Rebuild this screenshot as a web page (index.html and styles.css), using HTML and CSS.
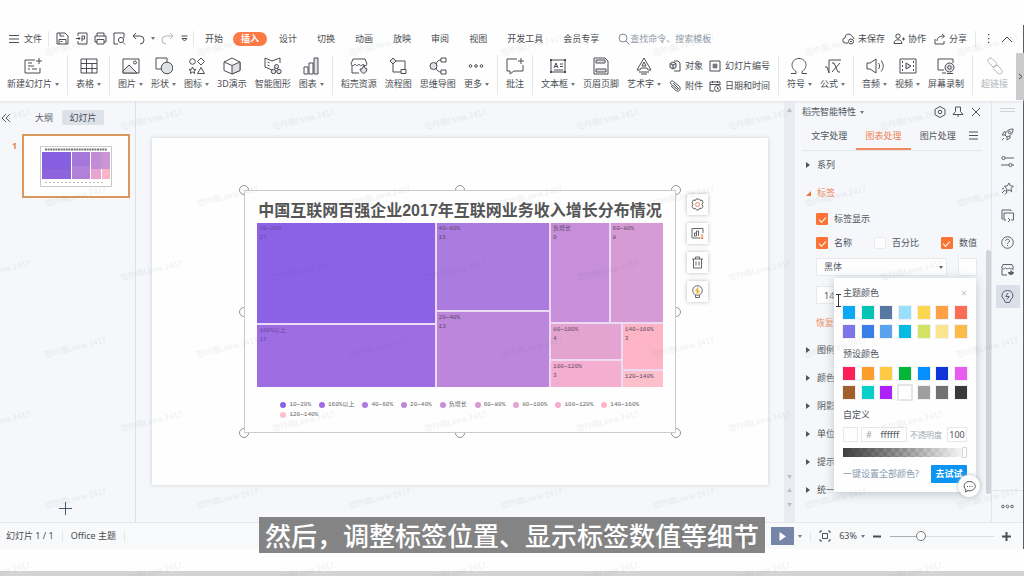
FILE: index.html
```html
<!DOCTYPE html>
<html lang="zh-CN">
<head>
<meta charset="utf-8">
<meta name="viewport" content="width=device-width, initial-scale=1">
<title>演示文稿</title>
<link rel="stylesheet" href="styles.css">
</head>
<body>
<div class="app">
  <nav class="menubar">
    <button class="file"><svg class="i12" viewBox="0 0 12 12"><path d="M1 2.500h10M1 6h10M1 9.500h10"/></svg>文件</button>
    <i class="sep"></i>
    <div class="quick">
      <button aria-label="保存"><svg class="i13" viewBox="0 0 13 13"><path d="M1 1h8l3 3v8H1zM3 12V7.500h7V12M4 1v3h4M4.500 9.500h2"/></svg></button>
      <button aria-label="导出"><svg class="i13" viewBox="0 0 13 13"><path d="M3 4V1h9v11H3V9M1 6.500h4M3.500 5l1.500 1.500L3.500 8M7 9.500V4h2.500v3H7"/></svg></button>
      <button aria-label="打印"><svg class="i13" viewBox="0 0 13 13"><path d="M3 4V1h7v3M3 10H1V4h11v6h-2M3 7.500h7V12H3z"/></svg></button>
      <button aria-label="预览"><svg class="i13" viewBox="0 0 13 13"><path d="M5 12H1V1h10v5M10 10.500l2 2"/><circle cx="8" cy="8" r="2.600"/></svg></button>
      <button aria-label="撤销"><svg class="i13" viewBox="0 0 13 13"><path d="M4 1L1 4l3 3M1 4h7a4 4 0 0 1 0 8"/></svg></button>
      <i class="caret"></i>
      <button aria-label="重做" class="dim"><svg class="i13" viewBox="0 0 13 13"><path d="M9 1l3 3-3 3M12 4H5a4 4 0 0 0 0 8"/></svg></button>
      <button aria-label="更多快捷"><svg class="i9" viewBox="0 0 9 9"><path d="M1.500 2h6M2 4.500h5L4.500 7z"/></svg></button>
    </div>
    <i class="sep"></i>
    <div class="tabs">
      <button>开始</button><button class="on">插入</button><button>设计</button><button>切换</button><button>动画</button><button>放映</button><button>审阅</button><button>视图</button><button>开发工具</button><button>会员专享</button>
    </div>
    <label class="search"><svg class="i12" viewBox="0 0 12 12"><circle cx="5" cy="5" r="4"/><path d="M8 8l3.500 3.500"/></svg><input type="text" placeholder="查找命令、搜索模板" aria-label="查找命令"></label>
    <div class="account">
      <button><svg class="i13" viewBox="0 0 13 13"><path d="M6 11H3.500a2.500 2.500 0 0 1-.5-5 3.600 3.600 0 0 1 7-1.500 2.800 2.800 0 0 1 2 2.500"/><circle cx="9" cy="9.500" r="2.500"/><path d="M8 9.500h2"/></svg>未保存</button>
      <button><svg class="i12" viewBox="0 0 12 12"><circle cx="5" cy="3.200" r="2.200"/><path d="M1 10.500c0-5 8-5 8 0zM9 6h3M10.500 4.500v3"/></svg>协作</button>
      <button><svg class="i12" viewBox="0 0 12 12"><path d="M1 6v5h9V8M3 8c0-3 2-5 7-5M8 1l2.500 2L8 5.500"/></svg>分享</button>
      <i class="sep"></i>
      <button aria-label="更多"><svg class="i9" viewBox="0 0 9 9"><path class="fill" d="M4 0h1.300v1.300H4zM4 4h1.300v1.300H4zM4 7.700h1.300V9H4z"/></svg></button>
      <button aria-label="收起"><svg class="i12" viewBox="0 0 12 12"><path d="M1 9l5-5 5 5"/></svg></button>
    </div>
  </nav>

  <div class="ribbon">
    <button><svg viewBox="0 0 18 18"><path d="M11 3H1v13h15v-5M4 6h4M4 9h6M4 12h2M8 12h5M15 1v6M12 4h6"/></svg><span class="more">新建幻灯片</span></button>
    <i class="sep"></i>
    <button><svg viewBox="0 0 18 18"><path d="M1 2h16v14H1zM1 6.500h16M1 11.500h16M6.500 2v14M12 6.500V16"/></svg><span class="more">表格</span></button>
    <i class="sep"></i>
    <button><svg viewBox="0 0 18 18"><path d="M1 2h16v14H1z"/><path class="soft" d="M1 14l6-6 8 8H1z"/><circle cx="13" cy="5.500" r="1.500"/></svg><span class="more">图片</span></button>
    <button><svg viewBox="0 0 18 18"><path d="M1 1h11v11H1z"/><circle class="soft" cx="12" cy="11" r="5.800"/></svg><span class="more">形状</span></button>
    <button><svg viewBox="0 0 18 18"><circle cx="4.500" cy="4.500" r="2.800"/><path d="M13 1l3.500 3.500L13 8 9.500 4.500zM13 10.500l3.500 6h-7zM4.500 10l1 2.300 2.500.2-2 1.600.7 2.400-2.200-1.400-2.200 1.400.7-2.400-2-1.600 2.500-.2z"/></svg><span class="more">图标</span></button>
    <button><svg viewBox="0 0 18 18"><path d="M9 1l8 4v8.500L9 17l-8-3.500V5z"/><path class="soft" d="M9 8.500L17 5v8.500L9 17z"/><path d="M1 5l8 3.500"/></svg><span>3D演示</span></button>
    <button><svg viewBox="0 0 18 18"><path d="M8 13l-7-3V1l7 3 8-3v5M3.500 5l2 1M3.500 8l2 1"/><path d="M12.500 9L9.500 14H15z"/><circle class="soft" cx="12.500" cy="9.500" r="2"/><circle class="soft" cx="9.500" cy="14.500" r="2.200"/><circle class="soft" cx="15" cy="14.500" r="2.200"/></svg><span>智能图形</span></button>
    <button><svg viewBox="0 0 18 18"><path d="M2 10h4v7H2zM7 6h4v11H7z"/><path class="soft" d="M12 1h4v16h-4z"/></svg><span class="more">图表</span></button>
    <i class="sep"></i>
    <button><svg viewBox="0 0 18 18"><path d="M9 16H2V8M16 8v1M3 2h12l2 5c-1 2-3 2-4 0-1 2-3 2-4 0-1 2-3 2-4 0-1 2-3 2-4 0z"/><path class="soft" d="M10 12c1 5 6 6 7 0l-2-1-1-3-2 4z"/></svg><span>稻壳资源</span></button>
    <button><svg viewBox="0 0 18 18"><path class="soft" d="M4 1l3 3-3 3-3-3z"/><path d="M7 4h9v8M4 7v8h8M12 12.500h5v4h-5z"/></svg><span>流程图</span></button>
    <button><svg viewBox="0 0 18 18"><circle class="soft" cx="4.500" cy="9" r="3.500"/><path d="M7 7c1-3 3-4 5-4M7 11c1 3 3 4 5 4M12 1h5v4h-5zM12 13h5v4h-5z"/></svg><span>思维导图</span></button>
    <button><svg viewBox="0 0 18 18"><circle cx="3.500" cy="9" r="1.300"/><circle cx="9" cy="9" r="1.300"/><circle cx="14.500" cy="9" r="1.300"/></svg><span class="more">更多</span></button>
    <i class="sep"></i>
    <button><svg viewBox="0 0 18 18"><path d="M11 2H1v12h3v3l4-3h9V8M15 1v6M12 4h6"/></svg><span>批注</span></button>
    <i class="sep"></i>
    <button><svg viewBox="0 0 18 18"><path d="M2 3h14v12H2zM5 11l2-5 2 5M6 9.500h2M11 7h3M11 9.500h3M5 13h9"/><path class="fill" d="M1 2h2v2H1zM15 2h2v2h-2zM1 14h2v2H1zM15 14h2v2h-2z"/></svg><span class="more">文本框</span></button>
    <button><svg viewBox="0 0 18 18"><path d="M2 1h11l3 3v13H2z"/><path class="soft" d="M4 3h9v3H4zM4 12h10v3H4z"/></svg><span>页眉页脚</span></button>
    <button><svg viewBox="0 0 18 18"><path d="M9 1l7 12h-3l-1-2H6l-1 2H2zM9 5l-2 4h4zM4 15h10M6 17h6"/></svg><span class="more">艺术字</span></button>
    <div class="pairs">
      <button><svg viewBox="0 0 12 12"><path d="M5 1h4l2 2v8H5"/><path class="soft" d="M4 2l3 1.500v4L4 9 1 7.500v-4zM1 3.500L4 5l3-1.500M4 5v4"/></svg>对象</button>
      <button><svg viewBox="0 0 12 12"><path d="M1 1h10v10H1zM5 3.500v5M7 3.500v5M3.500 5h5M3.500 7h5"/></svg>幻灯片编号</button>
      <button><svg viewBox="0 0 12 12"><path d="M4 3l5 5c1 1 0 2-1 1L2 4C0 2 3 0 4.500 1.500l6 5c2 3-1 6-3.500 4L2 6"/></svg>附件</button>
      <button><svg viewBox="0 0 12 12"><path d="M5 11H1V2h10v3M1 4.500h10M3.500 1v2M8.500 1v2"/><circle cx="8.500" cy="8.500" r="3"/><path d="M8.500 7v2H10"/></svg>日期和时间</button>
    </div>
    <i class="sep"></i>
    <button><svg viewBox="0 0 18 18"><path d="M1 16.500h5v-2C-1 10 2 1.500 9 1.500S19 10 12 14.500v2h5"/></svg><span class="more">符号</span></button>
    <button><svg viewBox="0 0 18 18"><path d="M1 10h2l2 6V3h12M8 6h2l4 9h2M16 6L8 15"/></svg><span class="more">公式</span></button>
    <i class="sep"></i>
    <button><svg viewBox="0 0 18 18"><path d="M1 6h3l6-4v14l-6-4H1zM12.500 6c1.500 2 1.500 4 0 6M15 3.500c3 4 3 7 0 11"/></svg><span class="more">音频</span></button>
    <button><svg viewBox="0 0 18 18"><path d="M1 2h16v14H1z"/><path class="soft" d="M7 6l5 3-5 3z"/><path stroke-dasharray="2 2" d="M3.500 4v11M14.500 4v11"/></svg><span class="more">视频</span></button>
    <button><svg viewBox="0 0 18 18"><path d="M7 13H1V2h15v4M5 16h4"/><circle class="soft" cx="12.500" cy="10.500" r="4.500"/><circle cx="12.500" cy="10.500" r="1.800"/><path d="M10 16.500h6"/></svg><span>屏幕录制</span></button>
    <i class="sep"></i>
    <button class="dim"><svg viewBox="0 0 18 18"><path d="M7 10L2.500 5.500c-2-3 1-5.500 3.500-4L10 5.500c2 3-1 5-3 4M11 8l4.500 4.500c2 3-1 5.500-3.500 4L8 12.500c-2-3 1-5 3-4"/></svg><span>超链接</span></button>
    <button class="scroll" aria-label="向右滚动"><svg class="i9" viewBox="0 0 9 9"><path d="M3 2l3 2.500L3 7"/></svg></button>
  </div>

  <main class="work">
    <aside class="outline">
      <div class="outline-tabs">
        <button aria-label="收起"><svg class="i12" viewBox="0 0 12 12"><path d="M5 2L1 6l4 4M9 2L5 6l4 4"/></svg></button>
        <button>大纲</button><button class="on">幻灯片</button>
      </div>
      <div class="thumb-row">
        <span>1</span>
        <div class="thumb">
          <svg viewBox="0 0 72 41"><path fill="#fff" stroke="#c8c8c8" d="M.5.500h71v40H.5z"/><path stroke="#777" stroke-width="2" stroke-dasharray="2 .6" d="M5 3.500h62"/><g stroke="none"><path fill="#855fdf" d="M2 6h29v17H2z"/><path fill="#8d64dc" d="M2 23h29v10H2z"/><path fill="#a577d9" d="M32 6h18v14H32z"/><path fill="#b181d8" d="M32 20h18v13H32z"/><path fill="#c18cd6" d="M51 6h10v17H51z"/><path fill="#cb94d4" d="M61 6h9v17h-9z"/><path fill="#e6a5cf" d="M51 23h10v10H51z"/><path fill="#f9b5c8" d="M62 23h8v10h-8z"/></g><path stroke="#bbb" stroke-dasharray="2 2" d="M5 36.500h60"/></svg>
        </div>
      </div>
      <button class="add" aria-label="新建幻灯片"><svg class="i13" viewBox="0 0 13 13"><path d="M6.500 0v13M0 6.500h13"/></svg></button>
    </aside>

    <section class="stage">
      <div class="slide">
        <div class="selection">
          <i class="h nw"></i><i class="h n"></i><i class="h ne"></i><i class="h w"></i><i class="h e"></i><i class="h sw"></i><i class="h s"></i><i class="h se"></i>
          <div class="chart">
            <h1>中国互联网百强企业2017年互联网业务收入增长分布情况</h1>
            <div class="treemap">
              <div class="col a"><div class="c1 faint">10~20%<br>27</div><div class="c2 faint">160%以上<br>17</div></div>
              <div class="col b"><div class="c3">40~60%<br>15</div><div class="c4">20~40%<br>13</div></div>
              <div class="col c">
                <div class="top"><div class="c5">负增长<br>9</div><div class="c6">60~80%<br>8</div></div>
                <div class="bottom">
                  <div class="col d"><div class="c7">80~100%<br>4</div><div class="c8">100~120%<br>3</div></div>
                  <div class="col e"><div class="c9">140~160%<br>3</div><div class="c10">120~140%</div></div>
                </div>
              </div>
            </div>
            <ul class="legend">
              <li><i class="c1"></i>10~20%</li><li><i class="c2"></i>160%以上</li><li><i class="c3"></i>40~60%</li><li><i class="c4"></i>20~40%</li><li><i class="c5"></i>负增长</li><li><i class="c6"></i>60~80%</li><li><i class="c7"></i>80~100%</li><li><i class="c8"></i>100~120%</li><li><i class="c9"></i>140~160%</li><li><i class="c10"></i>120~140%</li>
            </ul>
          </div>
          <div class="tools">
            <button aria-label="设置"><svg class="i13" viewBox="0 0 13 13"><path d="M5 1h3l1 1.500 2-.5 1 2.500-1 2 1 2-1.500 2-2-.2L7.500 12h-2L4.500 10.500l-2 .2L1 8.500l1-2-1-2L2.500 2l2 .5z"/><circle cx="6.500" cy="6.500" r="2" stroke="#f08a70"/></svg></button>
            <button aria-label="图表数据"><svg class="i13" viewBox="0 0 13 13"><path d="M9 11H1V1.500h11V6M3.500 9V6h2v3zM5.500 9V4h2v5"/><path stroke="#f0763c" d="M11 7v5M9.500 10.500L11 12l1.500-1.500"/></svg></button>
            <button aria-label="删除"><svg class="i13" viewBox="0 0 13 13"><path d="M1 3h11M4.500 3V1h4v2M2.500 3v9h8V3M5 5.500v4M8 5.500v4"/></svg></button>
            <button aria-label="灵感"><svg class="i13" viewBox="0 0 13 13"><circle cx="6.500" cy="5.500" r="4.800"/><path d="M4.500 10v2.500h4V10"/><path fill="#f7c03c" stroke="#f0b030" d="M7 2.500L4.500 6h4L6 9z"/></svg></button>
          </div>
        </div>
      </div>
    </section>
    <div class="vscroll"><span>▲</span><div><span>▼</span><span>▲</span><span>▼</span></div></div>

    <aside class="props">
      <header>
        <span class="more">稻壳智能特性</span>
        <div>
          <button aria-label="设置"><svg class="i12" viewBox="0 0 12 12"><path d="M6 .5l5 2.800v5.400l-5 2.800-5-2.800V3.300z"/><circle cx="6" cy="6" r="1.800"/></svg></button>
          <button aria-label="固定"><svg class="i12" viewBox="0 0 12 12"><path d="M3.500 1h5v4.500L11 8.500H1l2.500-3zM6 8.500V11"/></svg></button>
          <button aria-label="关闭"><svg class="i12" viewBox="0 0 12 12"><path d="M2 2l8 8M10 2l-8 8"/></svg></button>
        </div>
      </header>
      <div class="prop-tabs">
        <button>文字处理</button><button class="on">图表处理</button><button>图片处理</button>
        <button class="list" aria-label="列表"><svg class="i9" viewBox="0 0 9 9"><path d="M0 1h9M0 4.500h9M0 8h9"/></svg></button>
      </div>
      <div class="acc">系列</div>
      <div class="acc open">标签</div>
      <div class="fields">
        <div class="checks"><label><input type="checkbox" checked>标签显示</label></div>
        <div class="checks spread"><label><input type="checkbox" checked>名称</label><label><input type="checkbox">百分比</label><label><input type="checkbox" checked>数值</label></div>
        <div class="line"><div class="pick"><select aria-label="字体"><option>黑体</option></select></div><button class="box" aria-label="字体颜色"></button></div>
        <div class="line"><input type="text" value="14" aria-label="字号"></div>
        <a href="#">恢复</a>
      </div>
      <div class="acc">图例</div><div class="acc">颜色</div><div class="acc">阴影</div><div class="acc">单位</div><div class="acc">提示</div><div class="acc">统一</div>
      <i class="thumbbar"></i>

      <div class="picker">
        <div class="phead"><b>主题颜色</b><button aria-label="关闭">×</button></div>
        <div class="swatches theme">
          <button aria-label="蓝"></button><button aria-label="青绿"></button><button aria-label="蓝灰"></button><button aria-label="浅蓝"></button><button aria-label="黄"></button><button aria-label="橙"></button><button aria-label="珊瑚"></button><button aria-label="紫"></button><button aria-label="钴蓝"></button><button aria-label="天蓝"></button><button aria-label="青"></button><button aria-label="黄绿"></button><button aria-label="浅黄"></button><button aria-label="杏"></button>
        </div>
        <b>预设颜色</b>
        <div class="swatches preset">
          <button aria-label="红"></button><button aria-label="橙"></button><button aria-label="黄"></button><button aria-label="绿"></button><button aria-label="蓝"></button><button aria-label="深蓝"></button><button aria-label="粉紫"></button><button aria-label="棕"></button><button aria-label="青"></button><button aria-label="紫"></button><button aria-label="白"></button><button aria-label="浅灰"></button><button aria-label="灰"></button><button aria-label="黑"></button>
        </div>
        <b>自定义</b>
        <div class="custom"><i></i><label class="hex"><span>#</span><input type="text" value="ffffff"></label><label class="op">不透明度<input type="text" value="100"></label></div>
        <input class="alpha" type="range" value="100" aria-label="不透明度">
        <div class="pfoot"><a href="#">一键设置全部颜色?</a><button>去试试</button></div>
        <button class="chat" aria-label="反馈"><svg class="i13" viewBox="0 0 13 13"><path d="M2.500 12l.5-2C-1 6 2 1.500 6.500 1.500S13 5 12 7.500s-4 4-7 3z"/><path class="fill" d="M4 6h1v1H4zM6.300 6h1v1h-1zM8.600 6h1v1h-1z"/></svg></button>
        <svg class="ibeam" viewBox="0 0 7 13"><path d="M1 .5h5M3.500.5v12M1 12.500h5"/></svg>
      </div>
    </aside>

    <nav class="rail">
      <i class="grip"></i>
      <button aria-label="美化"><svg viewBox="0 0 13 13"><path d="M4 7c1-4 4-6 8-6 0 4-2 7-6 8zM4 7H1l2-3h2M6 9v3l3-2V8M1 12l2-2"/><circle cx="8.500" cy="4.500" r="1.200"/></svg></button>
      <button aria-label="属性"><svg viewBox="0 0 13 13"><path d="M4 3h9M0 10h8M11 10h2"/><circle cx="2.500" cy="3" r="1.600"/><circle cx="9.500" cy="10" r="1.600"/></svg></button>
      <button aria-label="动画"><svg viewBox="0 0 13 13"><path d="M8 1l1.300 2.800 3 .4L10 6.500l.6 3L8 8l-3 1.500.6-3-2.200-2.300 3-.4zM4 8l-3 3M6 10l-2 2.500M3 6L1 7"/></svg></button>
      <button aria-label="版式"><svg viewBox="0 0 13 13"><path d="M2 10H1V1h9v1M5 11H3V4h9.500v7H10M7 9l2 2-2 2"/></svg></button>
      <button aria-label="帮助"><svg viewBox="0 0 13 13"><circle cx="6.500" cy="6.500" r="5.800"/><path d="M4.500 5c0-2.500 4-2.500 4 0 0 1.500-2 1.300-2 3M6.500 9v1"/></svg></button>
      <button aria-label="资源"><svg viewBox="0 0 13 13"><path d="M6 12H1V6M12 6v1M2 1.500h9L12.500 5c-2 1.500-3 1-4 0-1 1-3 1-4 0-1 1-2 1.500-4 0z"/><path class="fill" d="M7 9c0 4 6 4 6 0l-2-.5L10 7 9 9z"/></svg></button>
      <button class="on" aria-label="智能特性"><svg viewBox="0 0 13 13"><path d="M6.500.5a5 5 0 0 1 3.500 9l-1.500 3h-4L3 9.500a5 5 0 0 1 3.500-9zM7 3L4.800 6.500h3.400L6 9.500"/></svg></button>
      <button class="last" aria-label="更多"><svg viewBox="0 0 13 13"><circle cx="2" cy="6.500" r="1.300"/><circle cx="6.500" cy="6.500" r="1.300"/><circle cx="11" cy="6.500" r="1.300"/></svg></button>
    </nav>
  </main>

  <footer class="status">
    <span>幻灯片 1 / 1</span><i class="sep"></i><span>Office 主题</span><i class="sep"></i>
    <div class="views">
      <svg class="i12" viewBox="0 0 12 12"><path d="M6 1l5 2.500v4L6 11 1 7.500v-4zM1 3.500L6 6l5-2.500"/></svg>
      <svg class="i12" viewBox="0 0 12 12"><path d="M1 2h10M1 6h10M1 10h10"/></svg>
      <svg class="i12" viewBox="0 0 12 12"><path d="M1 1h10v8H1zM4 11h4"/></svg>
      <svg class="i12" viewBox="0 0 12 12"><path d="M1 1h10v10H1zM4 1v10"/></svg>
      <svg class="i12" viewBox="0 0 12 12"><path d="M1 1h10v10H1zM6 1v10"/></svg>
    </div>
    <button class="play" aria-label="放映"><svg class="i9" viewBox="0 0 9 9"><path class="fill" d="M1.500 0l6.500 4.500L1.500 9z"/></svg></button>
    <i class="caret"></i><i class="sep"></i>
    <svg class="i12" viewBox="0 0 12 12"><path d="M3 1H1v2M9 1h2v2M1 9v2h2M11 9v2H9M3.500 3.500h5v5h-5z"/></svg>
    <span class="more">63%</span>
    <button aria-label="缩小"><svg class="i9" viewBox="0 0 9 9"><path class="bold" d="M0 4.500h8"/></svg></button>
    <input class="zoom" type="range" value="28" aria-label="缩放">
    <button aria-label="放大"><svg class="i9" viewBox="0 0 9 9"><path class="bold" d="M0 4.500h9M4.500 0v9"/></svg></button>
  </footer>
</div>
<div class="edge"></div>

<svg class="watermark" aria-hidden="true">
  <defs><pattern id="wm" width="152" height="151" patternUnits="userSpaceOnUse">
    <g text-anchor="middle"><text transform="translate(76 48) rotate(-14)">范玲璐Linna 2417</text><text transform="translate(0 122) rotate(-14)">范玲璐Linna 2417</text><text transform="translate(152 122) rotate(-14)">范玲璐Linna 2417</text></g>
  </pattern></defs>
  <rect width="100%" height="100%" fill="url(#wm)"/>
</svg>
<p class="caption">然后，调整标签位置、显示标签数值等细节</p>
</body>
</html>
```
FILE: styles.css
```css
*, *::before, *::after { box-sizing: border-box; }
body {
  margin: 0; min-height: 100vh; position: relative; display: flex; flex-direction: column;
  padding-top: 25px; background: #fefefe; color: #4a4d52;
  font: 9px/12px "Noto Sans", "Noto Sans CJK SC", sans-serif;
}
button, input, select { font: inherit; color: inherit; margin: 0; padding: 0; border: 0; background: none; }
button { display: inline-flex; align-items: center; justify-content: center; white-space: nowrap; }
a { text-decoration: none; }
i { display: block; }
svg { display: block; flex: none; fill: none; stroke: currentColor; stroke-width: 1; }
.fill { fill: currentColor; stroke: none; }
.soft { fill: #dfe1e4; }
.bold { stroke-width: 2; }
.i9 { width: 9px; height: 9px; }
.i12 { width: 12px; height: 12px; }
.i13 { width: 13px; height: 13px; }
.dim { color: #b3b5b8; }
.sep { width: 1px; height: 16px; background: #e4e6e9; flex: none; }
.caret, .more::after { border: 2px solid transparent; border-top: 3px solid #777; border-bottom: 0; width: 4px; height: 3px; flex: none; }
.more { display: inline-flex; align-items: center; gap: 4px; white-space: nowrap; }
.more::after { content: ""; }

.app { flex: 1; display: flex; flex-direction: column; border-right: 1px solid #5b5d60; }
.edge { height: 27px; border-bottom: 5px solid #d4d4d4; }

.menubar { display: flex; align-items: center; height: 27px; padding: 0 10px 0 8px; }
.file { gap: 4px; margin-right: 6px; }
.quick { display: flex; align-items: center; gap: 6px; padding: 0 4px 0 7px; }
.tabs { display: flex; padding-left: 1px; }
.tabs button { height: 14px; padding: 0 10px; }
.tabs .on { padding: 0 8px; margin-right: 2px; border-radius: 8px; background: #fb7a45; color: #fff; font-weight: 700; }
.search { display: flex; align-items: center; flex: 1; margin-left: 9px; color: #7f8896; }
.search input { flex: 1; min-width: 90px; }
.search input::placeholder { color: #929baa; opacity: 1; }
.account { display: flex; align-items: center; gap: 8px; }
.account button { gap: 3px; }

.ribbon { display: flex; gap: 8px; padding: 3px 0 5px 7px; height: 49px; box-shadow: 0 1px 2px #dfe3e6; position: relative; }
.ribbon .more { gap: 3px; }
.ribbon > button { flex-direction: column; gap: 3px; padding-top: 2px; justify-content: flex-start; }
.ribbon > button > svg { width: 18px; height: 18px; }
.ribbon > .sep { height: 40px; }
.pairs { display: grid; grid-template-columns: auto auto; gap: 4px 6px; align-content: center; justify-items: start; }
.pairs button { gap: 4px; height: 16px; }
.pairs svg { width: 12px; height: 12px; }
.ribbon > .scroll { width: 9px; margin: -2px 0 -4px auto; background: #c9cbcd; justify-content: center; padding: 0; }
.ribbon > .scroll svg { width: 9px; height: 9px; }

.work { flex: 1; display: flex; background: #f5f7fa; }
.outline { width: 136px; border-right: 1px solid #dde2e7; display: flex; flex-direction: column; }
.outline-tabs { display: flex; align-items: center; padding: 9px 0 0 1px; }
.outline-tabs button { height: 15px; color: #5b606b; }
.outline-tabs button:nth-child(2) { margin: 0 9px 0 22px; }
.outline-tabs .on { width: 42px; border-radius: 2px; background: #dde2e8; color: #474d58; }
.thumb-row { display: flex; gap: 5px; padding: 9px 5px 0 12px; }
.thumb-row span { color: #d98848; font-weight: 700; padding-top: 6px; }
.thumb { flex: 1; height: 64px; border: 2px solid #d9985f; background: #fefefe; display: grid; place-items: center; }
.thumb svg { width: 72px; height: 41px; }
.add { margin: auto auto 7px 59px; color: #4b5675; }

.stage { flex: 1; display: grid; padding: 37px 16px; }
.slide { background: #fefefe; box-shadow: 0 0 4px #c9d0d4; display: grid; place-items: start center; padding-top: 52px; }
.selection { position: relative; width: 70%; isolation: isolate; }
.chart { border: 1px solid #c9cccf; background: #fefefe; padding: 11px 12px 12px; }
.h { position: absolute; z-index: -1; width: 10px; height: 10px; margin: -5px; border: 1px solid #8f9499; border-radius: 50%; background: #fefefe; }
.nw, .n, .ne { top: 0; } .w, .e { top: 50%; } .sw, .s, .se { top: 100%; }
.nw, .w, .sw { left: 0; } .n, .s { left: 50%; } .ne, .e, .se { left: 100%; }
.chart h1 { margin: 0 -6px 3px; text-align: center; white-space: nowrap; font: 700 16px/18px "Liberation Sans", "Noto Sans CJK SC", sans-serif; color: #555; }
.treemap { display: flex; gap: 2px; height: 164px; background: #ecd9f3; font: 6px/9px "Liberation Mono", "Noto Sans CJK SC", monospace; color: #5f4a68; }
.treemap div:not([class^="col"]):not(.top):not(.bottom) { padding: 1px 2px; white-space: nowrap; overflow: hidden; }
.col { display: flex; flex-direction: column; gap: 2px; }
.top, .bottom { display: flex; gap: 2px; }
.a { flex: 178; } .b { flex: 113; } .c { flex: 112; }
.a .c1 { flex: 100; } .a .c2 { flex: 62; }
.b .c3 { flex: 87; } .b .c4 { flex: 75; }
.top { flex: 99; } .bottom { flex: 63; }
.top .c5 { flex: 58; } .top .c6 { flex: 52; }
.d { flex: 70; } .e.col { flex: 40; }
.d .c7 { flex: 35; } .d .c8 { flex: 26; }
.e .c9 { flex: 46; } .e .c10 { flex: 15; }
.treemap .faint { color: #69499c; }
.c1 { background: #8b61e6; } .c2 { background: #9f6de3; } .c3 { background: #ab7be0; } .c4 { background: #bb86dc; } .c5 { background: #c78fda; }
.c6 { background: #d69ad5; } .c7 { background: #e3a4d1; } .c8 { background: #f4afd0; } .c9 { background: #fdb5c6; } .c10 { background: #fbc0c9; }
.legend { list-style: none; display: flex; flex-wrap: wrap; gap: 0 8px; margin: 13px 10px 0 23px; padding: 0; font: 6px/10px "Liberation Mono", "Noto Sans CJK SC", monospace; color: #666; }
.legend li { display: flex; align-items: center; gap: 3px; }
.legend i { width: 6px; height: 6px; border-radius: 50%; }
.tools { position: absolute; left: 100%; top: 4px; margin-left: 11px; display: grid; gap: 8px; }
.tools button { width: 21px; height: 21px; background: #fefefe; box-shadow: 0 0 4px #bbb; color: #666; }

.vscroll { width: 11px; background: #e9edf3; color: #b7bfca; font-size: 5px; display: flex; flex-direction: column; justify-content: space-between; align-items: center; padding: 3px 0 12px; }
.vscroll div { display: grid; gap: 2px; }

.props { width: 197px; position: relative; padding: 0 9px 0 7px; border-right: 1px solid #e3e7ec; color: #4f545c; }
.props header { display: flex; justify-content: space-between; align-items: center; height: 22px; }
.props header div { display: flex; gap: 6px; }
.prop-tabs { display: flex; align-items: stretch; height: 28px; border-bottom: 1px solid #e3e7ec; }
.prop-tabs button { flex: 1; border-bottom: 2px solid transparent; }
.prop-tabs .on { color: #f08355; border-color: #f08a5e; }
.prop-tabs .list { flex: none; width: 17px; }
.acc { display: flex; align-items: center; gap: 7px; height: 28px; padding-left: 4px; }
.acc::before { content: ""; border: 3px solid transparent; border-left: 4px solid #50545a; border-right: 0; }
.open { color: #f08355; gap: 6px; }
.open::before { border: 0; border-left: 5px solid transparent; border-bottom: 5px solid #f0703c; }
.fields { padding: 6px 5px 0 14px; display: grid; }
.checks { height: 24px; display: flex; align-items: start; justify-content: space-between; }
.checks label { display: flex; align-items: center; gap: 6px; }
input[type="checkbox"] { appearance: none; width: 12px; height: 12px; border: 1px solid #e8eaed; border-radius: 1px; background: #fefefe; display: grid; place-items: center; }
input[type="checkbox"]:checked { background: #fb7434; border-color: #fb7434; }
input[type="checkbox"]:checked::after { content: ""; width: 7px; height: 4px; border: solid #fff; border-width: 0 0 1px 1px; transform: rotate(-45deg); }
.line { height: 28px; display: flex; justify-content: space-between; align-items: center; margin-top: -8px; }
.line + .line { margin-top: 0; }
.line select, .line input, .box { height: 18px; background: #fefefe; border: 1px solid #e6e9ec; }
.pick { display: grid; align-items: center; }
.pick > *, .pick::after { grid-area: 1 / 1; }
.pick::after { content: ""; justify-self: end; margin-right: 4px; border: 2px solid transparent; border-top: 3px solid #666; border-bottom: 0; pointer-events: none; }
.line select { appearance: none; width: 131px; padding: 0 7px; }
.line input { width: 131px; padding: 0 7px; }
.box { width: 19px; }
.fields a { color: #f08a62; line-height: 28px; height: 27px; }
.thumbbar { position: absolute; right: 0; top: 149px; bottom: 28px; width: 5px; border-radius: 3px; background: #cfd3da; }

.picker { position: absolute; left: 39px; top: 177px; width: 142px; background: #fefefe; box-shadow: 0 2px 10px #bfc4cb; padding: 9px; display: grid; }
.picker b { font-weight: 400; }
.phead { display: flex; justify-content: space-between; }
.phead button { color: #c3c6ca; font-size: 11px; }
.swatches { display: grid; grid-template-columns: repeat(7, 12px); justify-content: space-between; gap: 6px 0; margin: 7px 0 10px; }
.swatches button { height: 13px; outline: 1px solid #f0f1f2; }
.theme :nth-child(1) { background: #0aa8f5; } .theme :nth-child(2) { background: #04c3b4; } .theme :nth-child(3) { background: #5877a2; } .theme :nth-child(4) { background: #97dffb; } .theme :nth-child(5) { background: #fbd64e; } .theme :nth-child(6) { background: #fda144; } .theme :nth-child(7) { background: #fc6d58; }
.theme :nth-child(8) { background: #7d75e8; } .theme :nth-child(9) { background: #397ee8; } .theme :nth-child(10) { background: #5aa2ee; } .theme :nth-child(11) { background: #06bbe0; } .theme :nth-child(12) { background: #d3e364; } .theme :nth-child(13) { background: #fbe490; } .theme :nth-child(14) { background: #fdbc4a; }
.preset :nth-child(1) { background: #fb2158; } .preset :nth-child(2) { background: #fd9d2b; } .preset :nth-child(3) { background: #fdca45; } .preset :nth-child(4) { background: #04b638; } .preset :nth-child(5) { background: #058ffc; } .preset :nth-child(6) { background: #1034d6; } .preset :nth-child(7) { background: #e85df0; }
.preset :nth-child(8) { background: #a25f2b; } .preset :nth-child(9) { background: #06d0c9; } .preset :nth-child(10) { background: #ad22fb; } .preset :nth-child(11) { background: #fefefe; outline: 2px solid #e6e6e6; } .preset :nth-child(12) { background: #9f9f9f; } .preset :nth-child(13) { background: #717171; } .preset :nth-child(14) { background: #3a3a3a; }
.custom { display: flex; justify-content: space-between; margin-top: 6px; color: #a4a8ad; }
.custom > i { width: 15px; border: 1px solid #e6e8ea; }
.custom input { color: #4f545c; text-align: center; }
.hex { display: flex; align-items: center; width: 46px; padding-left: 4px; border: 1px solid #e6e8ea; }
.hex input { width: 36px; }
.op { display: flex; align-items: center; gap: 5px; font-size: 8px; }
.op input { width: 20px; height: 15px; border: 1px solid #e6e8ea; font-size: 9px; }
input[type="range"] { appearance: none; }
.alpha { width: 100%; height: 9px; margin: 6px 0 8px; background: linear-gradient(90deg, #404040, #40404000), linear-gradient(90deg, #fefefe00, #fefefe), repeating-conic-gradient(#bbb 0 25%, #fefefe 0 50%) 0 0 / 8px 8px; }
.alpha::-webkit-slider-thumb { appearance: none; width: 5px; height: 11px; border: 1px solid #d5d5d5; border-radius: 1px; background: #fefefe; }
.pfoot { display: flex; align-items: center; justify-content: space-between; white-space: nowrap; }
.pfoot a { color: #8a9bb3; }
.pfoot button { width: 36px; height: 18px; border-radius: 1px; background: #0c94f2; color: #fff; font-weight: 700; }
.chat { position: absolute; right: -4px; bottom: -5px; width: 22px; height: 22px; border-radius: 50%; background: #fefefe; box-shadow: 0 0 4px #b5b9be; color: #555; }
.ibeam { position: absolute; left: 1px; top: 16px; width: 7px; height: 13px; color: #333; }

.rail { width: 31px; display: flex; flex-direction: column; align-items: center; gap: 4px; color: #5b606a; }
.rail button { width: 24px; height: 23px; border-radius: 1px; }
.rail svg { width: 13px; height: 13px; }
.rail .on { background: #dbe0e8; }
.rail .last { margin-top: auto; width: 100%; height: 32px; border-top: 1px solid #e3e7ec; }
.grip { width: 15px; height: 4px; margin: 7px 0; border: solid #cfd3d8; border-width: 1px 0; }

.status { display: flex; align-items: center; gap: 8px; height: 27px; padding: 0 12px 0 6px; background: #f7f9fb; border-top: 1px solid #e3e8ec; }
.status .sep { height: 11px; }
.views { flex: 1; display: flex; justify-content: end; gap: 22px; padding-right: 12px; color: #444; }
.play { width: 23px; height: 18px; background: #7686a8; color: #fff; }
.status .caret { margin-left: -4px; }
.zoom { width: 104px; height: 12px; background: linear-gradient(#a9afb6, #a9afb6) no-repeat left center / 30% 1px, linear-gradient(#d9dde1, #d9dde1) no-repeat center / 100% 1px; }
.zoom::-webkit-slider-thumb { appearance: none; width: 10px; height: 10px; border: 1px solid #777; border-radius: 50%; background: #fefefe; }

.watermark { position: absolute; inset: 0; width: 100%; height: 100%; pointer-events: none; stroke: none; }
.watermark text { font: 8px "Liberation Sans", "Noto Sans CJK SC", sans-serif; fill: #30343c; fill-opacity: .09; }
.caption { position: absolute; left: 50%; bottom: 23px; transform: translateX(-50%); margin: 0; padding: 0 6px; background: #707070d9; color: #fff; white-space: nowrap; font: 500 26px/36px "Noto Sans CJK SC", sans-serif; }
```
